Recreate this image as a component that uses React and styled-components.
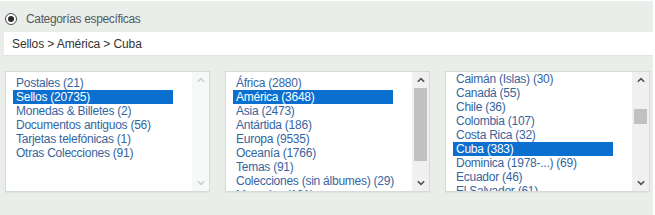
import React from "react";
import styled, { createGlobalStyle } from "styled-components";

const Global = createGlobalStyle`
  html, body { margin: 0; padding: 0; background: #ffffff; }
  body { font-family: "Liberation Sans", Arial, sans-serif; }
`;

const Page = styled.div`
  box-sizing: border-box;
  width: 653px;
  height: 214px;
  margin-top: 1px;
  background: #e9eeeb;
  padding: 0 0 0 5px;
  display: flex;
  flex-direction: column;
`;

const Header = styled.label`
  height: 31px;
  display: flex;
  align-items: center;
  gap: 9px;
  font-size: 12px;
  letter-spacing: -0.35px;
  color: #555a58;
  padding-top: 4px;
  box-sizing: border-box;
`;

const Radio = styled.span`
  box-sizing: border-box;
  width: 12px;
  height: 12px;
  border-radius: 50%;
  border: 1px solid #4a4a4a;
  background: #fff;
  display: flex;
  align-items: center;
  justify-content: center;
  &::after {
    content: "";
    width: 6px;
    height: 6px;
    border-radius: 50%;
    background: #2a2a2a;
  }
`;

const PathBox = styled.div`
  box-sizing: border-box;
  height: 24px;
  margin-left: -1px;
  background: #ffffff;
  border-bottom: 1px solid #e0e4e2;
  display: flex;
  align-items: center;
  padding-left: 8px;
  font-size: 12px;
  letter-spacing: -0.1px;
  color: #333;
`;

const Lists = styled.div`
  display: flex;
  gap: 15px;
  margin-top: 15px;
`;

const Box = styled.div`
  box-sizing: border-box;
  width: 205px;
  height: 121px;
  background: #fff;
  border: 1px solid #d6dbd8;
  box-shadow: 0 1px 1px rgba(0, 0, 0, 0.04);
  display: flex;
  overflow: hidden;
`;

const ListArea = styled.ul`
  flex: 1;
  list-style: none;
  margin: 0;
  padding: ${(p) => p.$top}px 0 0 7px;
  overflow: hidden;
`;

const Option = styled.li`
  box-sizing: border-box;
  width: 160px;
  height: 14px;
  line-height: 14px;
  padding-left: 3px;
  font-size: 12px;
  letter-spacing: -0.25px;
  white-space: nowrap;
  color: ${(p) => (p.$sel ? "#ffffff" : "#3565a0")};
  background: ${(p) => (p.$sel ? "#0b6fd0" : "transparent")};
`;

const Scrollbar = styled.div`
  width: 17px;
  background: ${(p) => (p.$active ? "#f0f0f0" : "#f7f8f8")};
  display: flex;
  flex-direction: column;
  align-items: center;
`;

const Arrow = styled.div`
  height: 16px;
  width: 17px;
  display: flex;
  align-items: center;
  justify-content: center;
  color: ${(p) => (p.$active ? "#505050" : "#cfcfcf")};
`;

const Track = styled.div`
  flex: 1;
  width: 17px;
  display: flex;
  justify-content: center;
`;

const Thumb = styled.div`
  width: 13px;
  background: #c1c1c1;
`;

const Chevron = ({ up }) => (
  <svg width="8" height="6" viewBox="0 0 8 6">
    <path
      d={up ? "M0.8 4.8 L4 1.6 L7.2 4.8" : "M0.8 1.2 L4 4.4 L7.2 1.2"}
      fill="none"
      stroke="currentColor"
      strokeWidth="1.6"
    />
  </svg>
);

function ListBox({ items, selected, top = 4, thumb }) {
  const active = !!thumb;
  return (
    <Box>
      <ListArea $top={top}>
        {items.map((it) => (
          <Option key={it} $sel={it === selected}>
            {it}
          </Option>
        ))}
      </ListArea>
      <Scrollbar $active={active}>
        <Arrow $active={active}>
          <Chevron up />
        </Arrow>
        <Track>
          {thumb && (
            <Thumb
              style={{ marginTop: thumb.top, height: thumb.height }}
            />
          )}
        </Track>
        <Arrow $active={active}>
          <Chevron />
        </Arrow>
      </Scrollbar>
    </Box>
  );
}

const col1 = [
  "Postales (21)",
  "Sellos (20735)",
  "Monedas & Billetes (2)",
  "Documentos antiguos (56)",
  "Tarjetas telefónicas (1)",
  "Otras Colecciones (91)",
];

const col2 = [
  "África (2880)",
  "América (3648)",
  "Asia (2473)",
  "Antártida (186)",
  "Europa (9535)",
  "Oceanía (1766)",
  "Temas (91)",
  "Colecciones (sin álbumes) (29)",
  "Monedas (121)",
];

const col3 = [
  "Caimán (Islas) (30)",
  "Canadá (55)",
  "Chile (36)",
  "Colombia (107)",
  "Costa Rica (32)",
  "Cuba (383)",
  "Dominica (1978-...) (69)",
  "Ecuador (46)",
  "El Salvador (61)",
];

export default function App() {
  return (
    <>
      <Global />
      <Page>
        <Header>
          <Radio />
          Categorías específicas
        </Header>
        <PathBox>Sellos &gt; América &gt; Cuba</PathBox>
        <Lists>
          <ListBox items={col1} selected="Sellos (20735)" />
          <ListBox
            items={col2}
            selected="América (3648)"
            thumb={{ top: 0, height: 73 }}
          />
          <ListBox
            items={col3}
            selected="Cuba (383)"
            top={0}
            thumb={{ top: 21, height: 15 }}
          />
        </Lists>
      </Page>
    </>
  );
}
